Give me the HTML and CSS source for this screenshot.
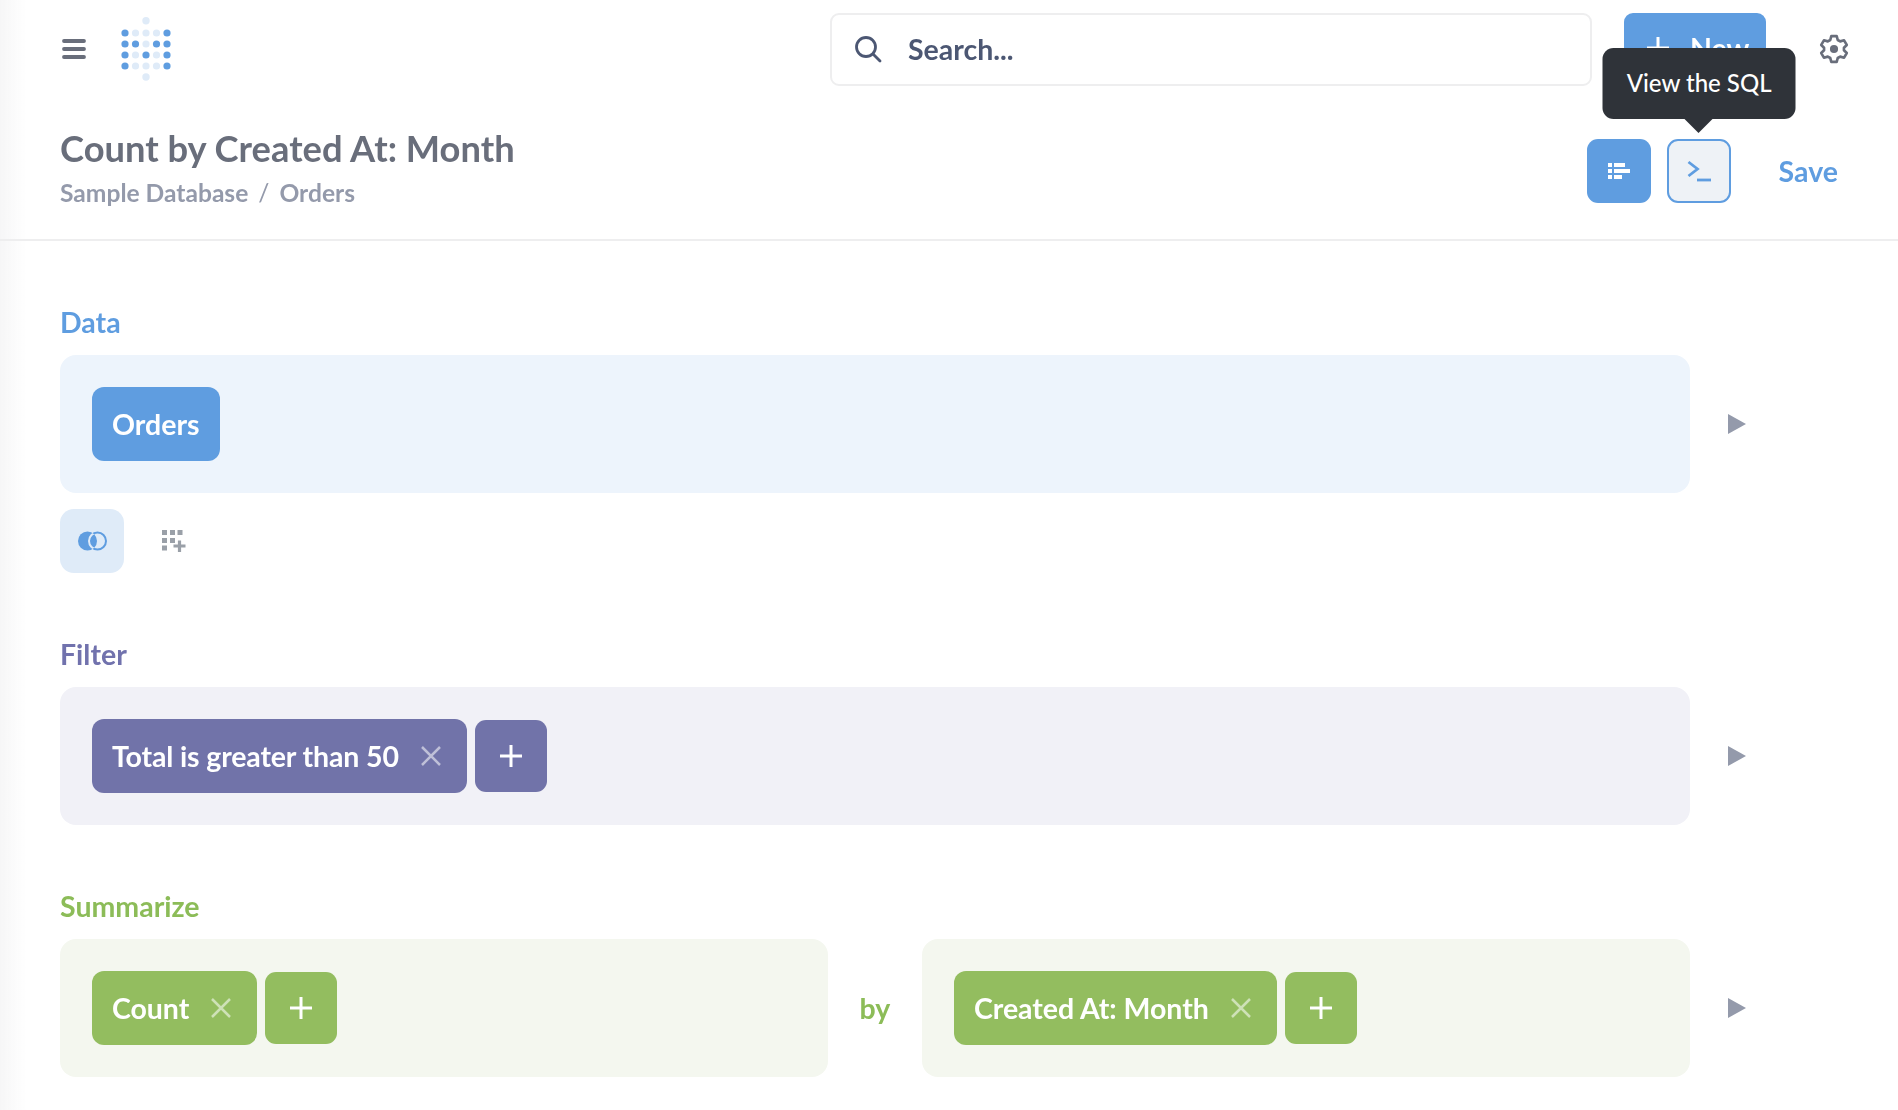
FILE: index.html
```html
<!DOCTYPE html>
<html lang="en">
<head>
<meta charset="utf-8">
<title>Count by Created At: Month</title>
<link rel="stylesheet" href="styles.css">
</head>
<body>
<div class="edge-shade"></div>
<div class="app">
  <header class="topbar">
    <button class="menu-btn" aria-label="Menu">
      <svg class="menu-icon" viewBox="0 0 24 20"><path d="M2 2h20M2 10h20M2 18h20" fill="none" stroke="#696e7b" stroke-width="3.800" stroke-linecap="round"/></svg>
    </button>
    <svg class="logo" viewBox="0 0 52 64">
      <g fill="#dfebf8">
        <circle cx="26" cy="3.700" r="3.700"/><circle cx="26" cy="60" r="3.700"/>
        <circle cx="15.500" cy="16" r="3.600"/><circle cx="26" cy="16" r="3.600"/><circle cx="36.500" cy="16" r="3.600"/>
        <circle cx="26" cy="27" r="3.600"/>
        <circle cx="15.500" cy="38" r="3.600"/><circle cx="36.500" cy="38" r="3.600"/>
        <circle cx="15.500" cy="49" r="3.600"/><circle cx="26" cy="49" r="3.600"/><circle cx="36.500" cy="49" r="3.600"/>
      </g>
      <g fill="#5f9de0">
        <circle cx="5" cy="16" r="3.600"/><circle cx="47" cy="16" r="3.600"/>
        <circle cx="5" cy="27" r="3.600"/><circle cx="15.500" cy="27" r="3.600"/><circle cx="36.500" cy="27" r="3.600"/><circle cx="47" cy="27" r="3.600"/>
        <circle cx="5" cy="38" r="3.600"/><circle cx="26" cy="38" r="3.600"/><circle cx="47" cy="38" r="3.600"/>
        <circle cx="5" cy="49" r="3.600"/><circle cx="47" cy="49" r="3.600"/>
      </g>
    </svg>
    <div class="search">
      <svg class="search-icon" viewBox="0 0 28 28"><circle cx="12" cy="12" r="9.500" fill="none" stroke="#4c5773" stroke-width="2.800"/><path d="M19 19l7 7" stroke="#4c5773" stroke-width="2.800" stroke-linecap="round"/></svg>
      <span class="search-text">Search...</span>
    </div>
    <button class="new-btn"><svg class="plus new-plus" viewBox="0 0 24 24"><path d="M12 1v22M1 12h22"/></svg>New</button>
    <svg class="gear" viewBox="0 0 28 28">
      <path d="M11.500 2h5l1 3.600 2.300 1.300 3.600-1 2.500 4.300-2.600 2.600v2.400l2.600 2.600-2.500 4.300-3.600-1-2.300 1.300-1 3.600h-5l-1-3.600-2.300-1.300-3.600 1-2.500-4.300 2.600-2.600v-2.400L2.100 10.200l2.500-4.300 3.600 1 2.300-1.300z" fill="none" stroke="#696e7b" stroke-width="2.500" stroke-linejoin="round"/>
      <circle cx="14" cy="14" r="3.800" fill="#696e7b"/>
    </svg>
  </header>

  <section class="title-bar">
    <div class="title-text">
      <h1 class="title">Count by Created At: Month</h1>
      <div class="crumbs"><span>Sample Database</span><span class="crumb-sep">/</span><span>Orders</span></div>
    </div>
    <div class="title-actions">
      <button class="square-btn square-solid" aria-label="Editor">
        <svg class="btn-icon" viewBox="0 0 24 20"><path d="M1 2h4v4H1zM7 2h11v4H7zM1 8h4v4H1zM7 8h16v4H7zM1 14h4v4H1zM7 14h8v4H7z" fill="#fff"/></svg>
      </button>
      <div class="sql-wrap">
        <div class="tooltip">View the SQL</div>
        <button class="square-btn square-outline" aria-label="View the SQL">
          <svg class="sql-icon" viewBox="0 0 24 22"><path d="M1.500 2l9 7-9 7" fill="none" stroke="#5f9de0" stroke-width="2.800"/><path d="M10 20h14" stroke="#5f9de0" stroke-width="2.800"/></svg>
        </button>
      </div>
      <button class="save-btn">Save</button>
    </div>
  </section>

  <main class="editor">
    <h2 class="label label-data">Data</h2>
    <div class="row">
      <div class="panel panel-data">
        <div class="chip chip-data">Orders</div>
      </div>
      <span class="play"></span>
    </div>
    <div class="tools">
      <button class="tool tool-active" aria-label="Join">
        <svg class="join-icon" viewBox="0 0 29 20">
          <defs><clipPath id="join-left"><circle cx="9.500" cy="10" r="9.500"/></clipPath></defs>
          <circle cx="19.500" cy="10" r="8.500" fill="none" stroke="#5f9de0" stroke-width="2"/>
          <circle cx="9.500" cy="10" r="9.500" fill="#5f9de0"/>
          <circle cx="19.500" cy="10" r="8.500" fill="none" stroke="#dfebf8" stroke-width="2" clip-path="url(#join-left)"/>
        </svg>
      </button>
      <button class="tool" aria-label="Custom column">
        <svg class="grid-icon" viewBox="0 0 26 26" fill="#9aa0a8">
          <path d="M1 1h5v5H1zM9 1h5v5H9zM16.500 1h5v5h-5zM1 9h5v5H1zM9 9h5v5H9zM1 16.500h5v5H1z"/>
          <path d="M12.500 17h12M18.500 11.500v11.500" stroke="#9aa0a8" stroke-width="3.200" fill="none"/>
        </svg>
      </button>
    </div>

    <h2 class="label label-filter">Filter</h2>
    <div class="row">
      <div class="panel panel-filter">
        <div class="chip chip-filter">Total is greater than 50<svg class="x" viewBox="0 0 20 20"><path d="M1 1l18 18M19 1L1 19"/></svg></div>
        <button class="add add-filter"><svg class="plus" viewBox="0 0 24 24"><path d="M12 1v22M1 12h22"/></svg></button>
      </div>
      <span class="play"></span>
    </div>

    <h2 class="label label-sum">Summarize</h2>
    <div class="row">
      <div class="sum-grid">
        <div class="panel panel-sum">
          <div class="chip chip-sum">Count<svg class="x" viewBox="0 0 20 20"><path d="M1 1l18 18M19 1L1 19"/></svg></div>
          <button class="add add-sum"><svg class="plus" viewBox="0 0 24 24"><path d="M12 1v22M1 12h22"/></svg></button>
        </div>
        <span class="by">by</span>
        <div class="panel panel-sum">
          <div class="chip chip-sum">Created At: Month<svg class="x" viewBox="0 0 20 20"><path d="M1 1l18 18M19 1L1 19"/></svg></div>
          <button class="add add-sum"><svg class="plus" viewBox="0 0 24 24"><path d="M12 1v22M1 12h22"/></svg></button>
        </div>
      </div>
      <span class="play"></span>
    </div>
  </main>
</div>
</body>
</html>
```
FILE: styles.css
```css
* { box-sizing: border-box; }
html, body { margin: 0; height: 100%; overflow: hidden; background: #fff; }
body { font-family: Lato, "Open Sans", sans-serif; color: #696e7b; }
button { font-family: inherit; border: 0; padding: 0; background: none; cursor: pointer; }
svg { display: block; }

.edge-shade {
  position: fixed; left: 0; top: 0; bottom: 0; width: 26px; pointer-events: none;
  background: linear-gradient(to right, #f6f6f7, rgba(255, 255, 255, 0));
}
.app { position: relative; display: flex; flex-direction: column; height: 100%; }

.topbar { display: flex; align-items: center; height: 98px; padding: 0 49px 0 60px; flex: none; }
.menu-btn { width: 24px; margin-left: 2px; }
.menu-icon { width: 24px; height: 20px; }
.logo { width: 52px; height: 64px; margin-left: 34px; }
.search {
  display: flex; align-items: center; width: 762px; height: 73px; margin-left: auto;
  border: 2px solid #eeeeef; border-radius: 9px; padding-left: 22px; background: #fff;
}
.search-icon { width: 28px; height: 28px; }
.search-text { margin-left: 26px; font-size: 28.500px; font-weight: 700; color: #4c5773; }
.new-btn {
  display: flex; align-items: center; gap: 20px; padding: 0 0 3px 22px;
  width: 142px; height: 73px; margin-left: 32px; background: #5f9de0; border-radius: 9px;
  color: #fff; font-size: 28.500px; font-weight: 700;
}
.new-plus { flex: none; }
.gear { width: 30px; height: 30px; margin-left: 53px; }

.title-bar {
  display: flex; align-items: center; justify-content: space-between; flex: none;
  height: 143px; padding: 0 60px 4px 60px; border-bottom: 2px solid #eeeeef;
}
.title { margin: 0; font-size: 36.300px; font-weight: 700; line-height: 44px; color: #696e7b; }
.crumbs { display: flex; gap: 10px; margin-top: 8px; font-size: 24.600px; font-weight: 700; line-height: 30px; color: #949aab; }
.crumb-sep { font-weight: 400; }
.title-actions { display: flex; align-items: center; margin-top: 8px; }
.square-btn { display: flex; align-items: center; justify-content: center; width: 64px; height: 64px; border-radius: 11px; }
.square-solid { background: #5f9de0; }
.square-outline { background: #eef2f6; border: 2px solid #5f9de0; }
.btn-icon { width: 24px; height: 20px; }
.sql-icon { width: 24px; height: 22px; }
.sql-wrap { position: relative; margin-left: 16px; }
.tooltip {
  position: absolute; left: 50%; bottom: 84px; transform: translateX(-50%); white-space: nowrap;
  width: 193px; height: 71px; display: flex; align-items: center; justify-content: center;
  padding: 0 0 2px 1px;
  background: #2f3339; color: #fff; border-radius: 11px; font-size: 24px; font-weight: 500;
}
.tooltip::after {
  content: ""; position: absolute; left: 50%; top: 100%; margin-left: -14px;
  border: 14px solid transparent; border-top-color: #2f3339; border-bottom: 0;
}
.save-btn { margin-left: 48px; color: #5f9de0; font-size: 28.500px; font-weight: 700; }

.editor { display: flex; flex-direction: column; flex: 1; padding: 64px 0 0 60px; }
.label { margin: 0 0 15px; font-size: 28.500px; font-weight: 700; line-height: 35px; }
.label-data { color: #5f9de0; }
.label-filter { color: #7172ad; margin-top: 64px; }
.label-sum { color: #8cbc58; margin-top: 64px; }

.row { display: flex; align-items: center; }
.panel { display: flex; align-items: center; gap: 8px; height: 138px; padding: 0 32px; border-radius: 16px; }
.row > .panel { width: 1630px; }
.panel-data { background: #edf4fc; }
.panel-filter { background: #f1f1f7; }
.panel-sum { background: #f4f7ef; }
.sum-grid { display: grid; grid-template-columns: 768px 94px 768px; align-items: center; }
.by { text-align: center; color: #8cbc58; font-size: 28.500px; font-weight: 700; }

.chip {
  display: flex; align-items: center; height: 74px; padding: 0 20px; border-radius: 12px;
  color: #fff; font-size: 28.500px; font-weight: 700;
}
.chip-data { background: #5f9de0; }
.chip-filter { background: #7173a9; letter-spacing: -0.140px; }
.chip-sum { background: #93bd5f; letter-spacing: -0.050px; }
.x { width: 20px; height: 20px; margin-left: 22px; margin-right: 6px; fill: none; stroke: rgba(255,255,255,.55); stroke-width: 2.500; }
.add { display: flex; align-items: center; justify-content: center; width: 72px; height: 72px; border-radius: 11px; }
.add-filter { background: #7173a9; }
.add-sum { background: #93bd5f; }
.plus { width: 24px; height: 24px; fill: none; stroke: #fff; stroke-width: 3; }

.play {
  flex: none; width: 0; height: 0; margin-left: 38px;
  border-style: solid; border-width: 10.500px 0 10.500px 18px; border-color: transparent transparent transparent #949aab;
}

.tools { display: flex; gap: 0; margin-top: 16px; }
.tool { display: flex; align-items: center; justify-content: center; width: 64px; height: 64px; border-radius: 14px; }
.tool-active { background: #dfebf8; }
.tool + .tool { margin-left: 18px; }
.join-icon { width: 29px; height: 20px; }
.grid-icon { width: 26px; height: 26px; margin-top: 2px; }
```
